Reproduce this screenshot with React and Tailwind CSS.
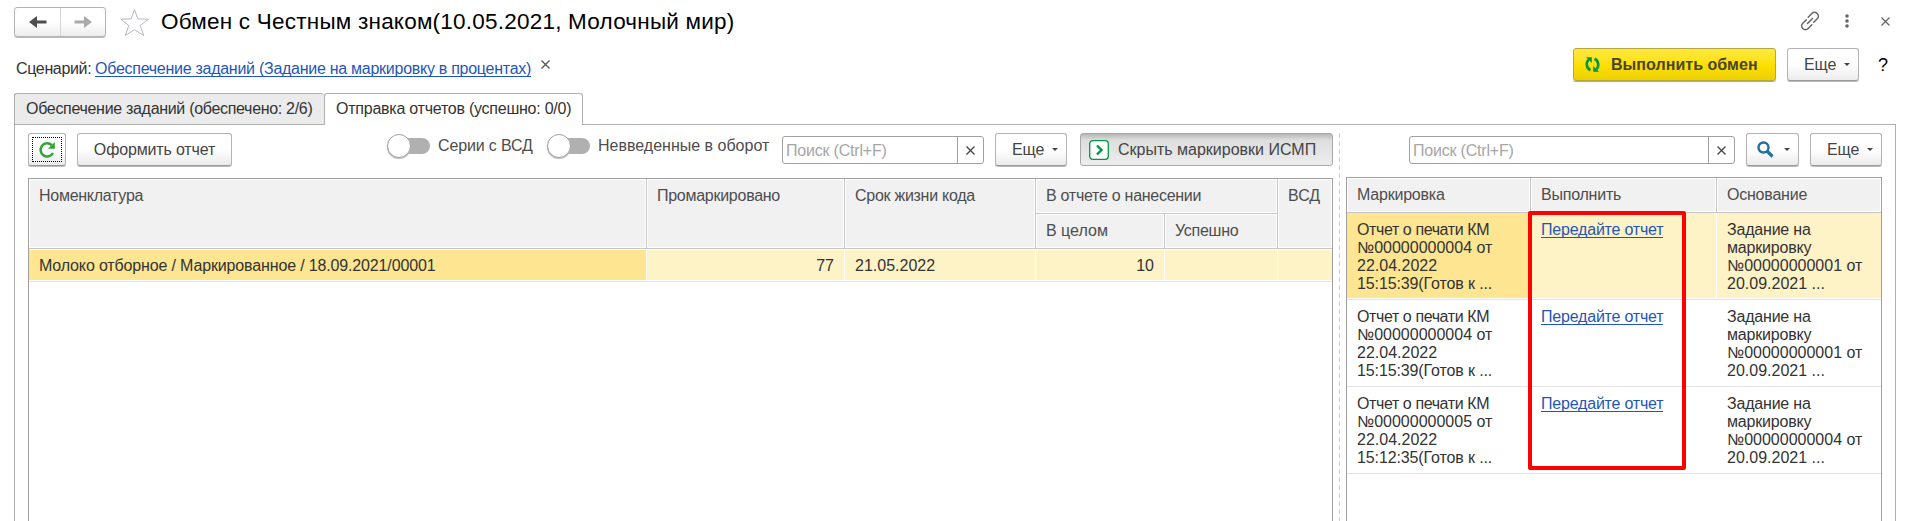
import React from "react";

const Cross = ({ className = "" }) => (
  <svg width="9" height="9" viewBox="0 0 9 9" className={className} fill="none" stroke="currentColor" strokeWidth="1.3">
    <path d="M.5.5l8 8M8.5.5l-8 8" />
  </svg>
);

const Caret = () => (
  <svg width="6" height="3" viewBox="0 0 6 3" className="shrink-0">
    <path d="M0 0h6L3 3z" fill="#444" />
  </svg>
);

const Button = ({ className = "", children }) => (
  <button
    className={`flex h-[33px] shrink-0 items-center rounded-[3px] border border-[#b3b3b3] border-b-[#999] bg-linear-to-b from-white from-50% to-[#ebebeb] text-[#444] shadow-[0_1px_0_#bbb] ${className}`}
  >
    {children}
  </button>
);

const MoreButton = ({ className = "" }) => (
  <Button className={`w-[72px] justify-between pr-[8px] pl-[16px] ${className}`}>
    <span className="tracking-[-0.1px]">Еще</span>
    <Caret />
  </Button>
);

const Search = ({ className = "" }) => (
  <div className={`flex h-7 shrink-0 rounded-[3px] border border-[#a0a0a0] bg-white ${className}`}>
    <div className="flex flex-1 items-center pt-px pl-[3px] tracking-[-0.2px] text-[#a6a6a6]">Поиск (Ctrl+F)</div>
    <div className="flex w-[26px] items-center justify-center border-l border-[#a0a0a0] pt-px text-[#444]">
      <Cross />
    </div>
  </div>
);

const Toggle = ({ className = "" }) => (
  <div className={`flex h-6 w-[43px] shrink-0 items-center ${className}`}>
    <div className="z-10 size-6 shrink-0 rounded-full border border-[#a0a0a0] bg-white shadow-[0_1px_1px_#bbb]" />
    <div className="-ml-[10px] h-4 flex-1 rounded-r-full bg-[#b0b0b0]" />
  </div>
);

const Head = ({ className = "", children }) => (
  <div className={`border-r border-b border-[#c6c6c6] p-px ${className}`}>
    <div className="h-full bg-[#f1f1f1] pt-[7px] pl-[9px] leading-[18px] text-[#4d4d4d]">{children}</div>
  </div>
);

const rows = [
  { doc: "00000000004", time: "15:15:39", base: "00000000001", active: true },
  { doc: "00000000004", time: "15:15:39", base: "00000000001" },
  { doc: "00000000005", time: "15:12:35", base: "00000000004" },
];

const Row = ({ doc, time, base, active }) => (
  <div className="grid h-[87px] grid-cols-[184px_186px_1fr] border-b border-[#e2e2e2] pb-px leading-[18px] text-[#333]">
    <div className={`pt-2 pl-[10px] whitespace-nowrap ${active ? "bg-[#fde591]" : ""}`}>
      <div className="tracking-[-0.4px]">Отчет о печати КМ</div>
      <div>№{doc} от</div>
      <div>22.04.2022</div>
      <div className="tracking-[-0.12px]">{time}(Готов к ...</div>
    </div>
    <div className={`border-r border-white pt-2 pl-[10px] ${active ? "bg-[#fef2c7]" : ""}`}>
      <a className="inline-block h-[17px] border-b border-[#1f57b8] tracking-[-0.2px] text-[#1f57b8]">Передайте отчет</a>
    </div>
    <div className={`pt-2 pl-[10px] whitespace-nowrap ${active ? "bg-[#fef2c7]" : ""}`}>
      <div className="tracking-[-0.2px]">Задание на</div>
      <div className="tracking-[-0.2px]">маркировку</div>
      <div>№{base} от</div>
      <div>20.09.2021 ...</div>
    </div>
  </div>
);

export default function App() {
  return (
    <div className="relative flex h-[521px] w-[1918px] flex-col overflow-hidden bg-white font-['Liberation_Sans',Arial,sans-serif] text-[16px] leading-[18px] whitespace-nowrap text-[#333]">
      {/* Title bar */}
      <header className="flex h-[43px] shrink-0 items-start pt-[7px] pl-[14px]">
        <div className="flex h-[30px] w-[92px] rounded-[3px] border border-[#b3b3b3] bg-linear-to-b from-white from-50% to-[#ededed] shadow-[0_1px_0_#bbb]">
          <div className="flex w-[46px] items-center justify-center border-r border-[#d5d5d5]">
            <svg width="18" height="14" viewBox="0 0 18 14" fill="#4d4d4d">
              <path d="M0 7L8 1v4.5h9.5v3H8V13z" />
            </svg>
          </div>
          <div className="flex flex-1 items-center justify-center">
            <svg width="18" height="14" viewBox="0 0 18 14" fill="#aaa">
              <path d="M18 7l-8-6v4.5H.5v3H10V13z" />
            </svg>
          </div>
        </div>
        <svg width="30" height="29" viewBox="0 0 30 29" className="mt-px ml-[14px]" fill="none" stroke="#b4b8bd" strokeWidth="1">
          <path d="M14.5 1.5l3.4 9.4 10.6.3-8.4 6.4 3.7 9.9-9.3-5.800-9.300 5.800 3.700-9.900L.8 11.200l10.300-.3z" />
        </svg>
        <h1 className="mt-[1px] ml-[11px] text-[22.5px] leading-[28px] tracking-[0.22px] text-black">Обмен с Честным знаком(10.05.2021, Молочный мир)</h1>
        <div className="mt-[4px] mr-[28px] ml-auto flex items-center text-[#666]">
          <svg width="20" height="20" viewBox="0 0 20 20" fill="none" stroke="#666" strokeWidth="1.5" strokeLinecap="round">
            <path d="M8.200 6.200l3.600-3.700a3.600 3.600 0 0 1 5.400 0 3.600 3.600 0 0 1 0 5.300l-3.500 3.400M11.800 13.800l-3.600 3.700a3.600 3.600 0 0 1-5.400 0 3.600 3.600 0 0 1 0-5.300l3.500-3.400M7.500 12.500l5-5" />
          </svg>
          <svg width="4" height="14" viewBox="0 0 4 14" className="ml-[25px]" fill="#666">
            <circle cx="2" cy="2" r="1.8" />
            <circle cx="2" cy="7" r="1.8" />
            <circle cx="2" cy="12" r="1.8" />
          </svg>
          <Cross className="ml-[32px]" />
        </div>
      </header>

      {/* Scenario and main commands */}
      <div className="flex h-[50px] shrink-0 items-start pt-[5px] pl-[16px]">
        <span className="mt-[12px] w-[79px] tracking-[-0.35px]">Сценарий:</span>
        <a className="mt-[12px] h-[17px] border-b border-[#1f57b8] tracking-[-0.27px] text-[#1f57b8]">Обеспечение заданий (Задание на маркировку в процентах)</a>
        <Cross className="mt-[12px] ml-[10px] text-[#555]" />
        <button className="ml-auto flex h-[33px] w-[203px] items-center rounded-[3px] border border-[#b5a642] bg-linear-to-b from-[#ffe83b] via-[#fde000] to-[#ecd000] pl-[11px] font-bold text-[#4a4532] shadow-[0_1px_0_#aaa]">
          <svg width="15" height="15" viewBox="0 0 15 15" className="mr-[11px]">
            <path d="M5.500 13.200C.8 11 .8 4.600 4 2.500M9.500 1.800C14.200 4 14.200 10.400 11 12.500" fill="none" stroke="#009646" strokeWidth="2.600" />
            <path d="M1 .3h5.800v5.600zM14 14.700H8.200V9.100z" fill="#009646" />
          </svg>
          <span className="tracking-[0.05px]">Выполнить обмен</span>
        </button>
        <MoreButton className="ml-[11px]" />
        <span className="mt-[7px] mr-[31px] ml-[19px] w-[9px] text-[18px] leading-[20px] text-black">?</span>
      </div>

      {/* Tabs */}
      <div className="z-10 -mb-px flex h-8 shrink-0 pl-[14px]">
        <div className="flex w-[310px] items-center rounded-t-[3px] border border-r-0 border-[#b0b0b0] bg-[#ebebeb] pl-[11px] tracking-[-0.31px]">Обеспечение заданий (обеспечено: 2/6)</div>
        <div className="flex w-[259px] items-center rounded-t-[3px] border border-b-0 border-[#b0b0b0] bg-white pb-px pl-[11px] tracking-[-0.24px]">Отправка отчетов (успешно: 0/0)</div>
      </div>

      {/* Page */}
      <main className="mr-[22px] ml-[14px] flex min-h-0 flex-1 border border-b-0 border-[#b0b0b0] pt-2">
        <section className="ml-[13px] flex w-[1305px] shrink-0 flex-col">
          <div className="flex h-[45px] shrink-0 items-start text-[#4d4d4d]">
            <Button className="w-[38px] p-[3px]">
              <div className="flex h-full w-full items-center justify-center border border-dotted border-black">
                <svg width="18" height="18" viewBox="0 0 18 18">
                  <path d="M13.800 4.200A6.600 6.600 0 1 0 15 12" fill="none" stroke="#32a532" strokeWidth="2.600" />
                  <path d="M16.800 1v6.800H10z" fill="#32a532" />
                </svg>
              </div>
            </Button>
            <Button className="ml-[11px] w-[155px] justify-center">
              <span className="tracking-[-0.15px]">Оформить отчет</span>
            </Button>
            <Toggle className="mt-px ml-[155px]" />
            <span className="mt-[4px] ml-2 w-[109px] tracking-[-0.15px]">Серии с ВСД</span>
            <Toggle className="mt-px" />
            <span className="mt-[4px] ml-2 w-[184px]">Невведенные в оборот</span>
            <Search className="mt-[3px] w-[202px]" />
            <MoreButton className="ml-[11px]" />
            <button className="ml-[13px] flex h-[33px] w-[253px] items-center rounded-[3px] border border-[#a8a8a8] bg-linear-to-b from-[#b8b8b8] via-[#dedede] via-20% to-[#ededed] pl-2 text-[#444]">
              <svg width="20" height="20" viewBox="0 0 20 20" className="mr-[9px]" fill="none" stroke="#009646">
                <rect x=".7" y=".7" width="18.600" height="18.600" rx="3" fill="white" strokeWidth="1.300" />
                <path d="M8 5.500l4.500 4.500L8 14.500" strokeWidth="2.400" />
              </svg>
              <span>Скрыть маркировки ИСМП</span>
            </button>
          </div>

          <div className="flex min-h-0 flex-1 flex-col border border-b-0 border-[#a0a0a0]">
            <div className="grid h-[70px] shrink-0 grid-cols-[618px_198px_191px_129px_113px_1fr] grid-rows-2 tracking-[-0.27px]">
              <Head className="row-span-2">Номенклатура</Head>
              <Head className="row-span-2">Промаркировано</Head>
              <Head className="row-span-2">Срок жизни кода</Head>
              <Head className="col-span-2">В отчете о нанесении</Head>
              <Head className="row-span-2 border-r-0 tracking-normal">ВСД</Head>
              <Head className="tracking-normal">В целом</Head>
              <Head>Успешно</Head>
            </div>
            <div className="grid h-[33px] shrink-0 grid-cols-[618px_198px_191px_129px_113px_1fr] border-b border-[#e2e2e2] py-px *:border-r *:border-white *:bg-[#fef2c7] *:pt-[7px]">
              <div className="bg-[#fde591]! pl-[10px] tracking-[-0.15px]">Молоко отборное / Маркированное / 18.09.2021/00001</div>
              <div className="pr-[10px] text-right">77</div>
              <div className="pl-[10px]">21.05.2022</div>
              <div className="pr-[10px] text-right">10</div>
              <div />
              <div className="border-r-0!" />
            </div>
          </div>
        </section>

        {/* Splitter */}
        <div className="ml-[6px] w-px shrink-0 bg-[repeating-linear-gradient(to_bottom,#cfcfcf_0_5px,transparent_5px_8px)]" />

        <section className="ml-[6px] flex w-[536px] shrink-0 flex-col">
          <div className="flex h-11 shrink-0 items-start">
            <Search className="mt-[3px] ml-[63px] w-[326px]" />
            <Button className="ml-[11px] w-[53px] justify-between pr-[8px] pl-[10px]">
              <svg width="17" height="17" viewBox="0 0 17 17" fill="none" stroke="#2470a0">
                <circle cx="6.500" cy="6.500" r="5" strokeWidth="2.400" />
                <path d="M10 10l5.500 5.500" strokeWidth="3.200" />
              </svg>
              <Caret />
            </Button>
            <MoreButton className="ml-[11px]" />
          </div>
          <div className="flex min-h-0 flex-1 flex-col border border-b-0 border-[#a0a0a0]">
            <div className="grid h-[35px] shrink-0 grid-cols-[184px_186px_1fr] tracking-[-0.22px]">
              <Head>Маркировка</Head>
              <Head>Выполнить</Head>
              <Head className="border-r-0">Основание</Head>
            </div>
            {rows.map((row, i) => (
              <Row key={i} {...row} />
            ))}
          </div>
        </section>
      </main>

      {/* Highlight frame over the link column */}
      <div className="pointer-events-none absolute top-[211px] left-[1528px] z-20 h-[259px] w-[158px] rounded-[2px] border-4 border-[#ff0000]" />
    </div>
  );
}
